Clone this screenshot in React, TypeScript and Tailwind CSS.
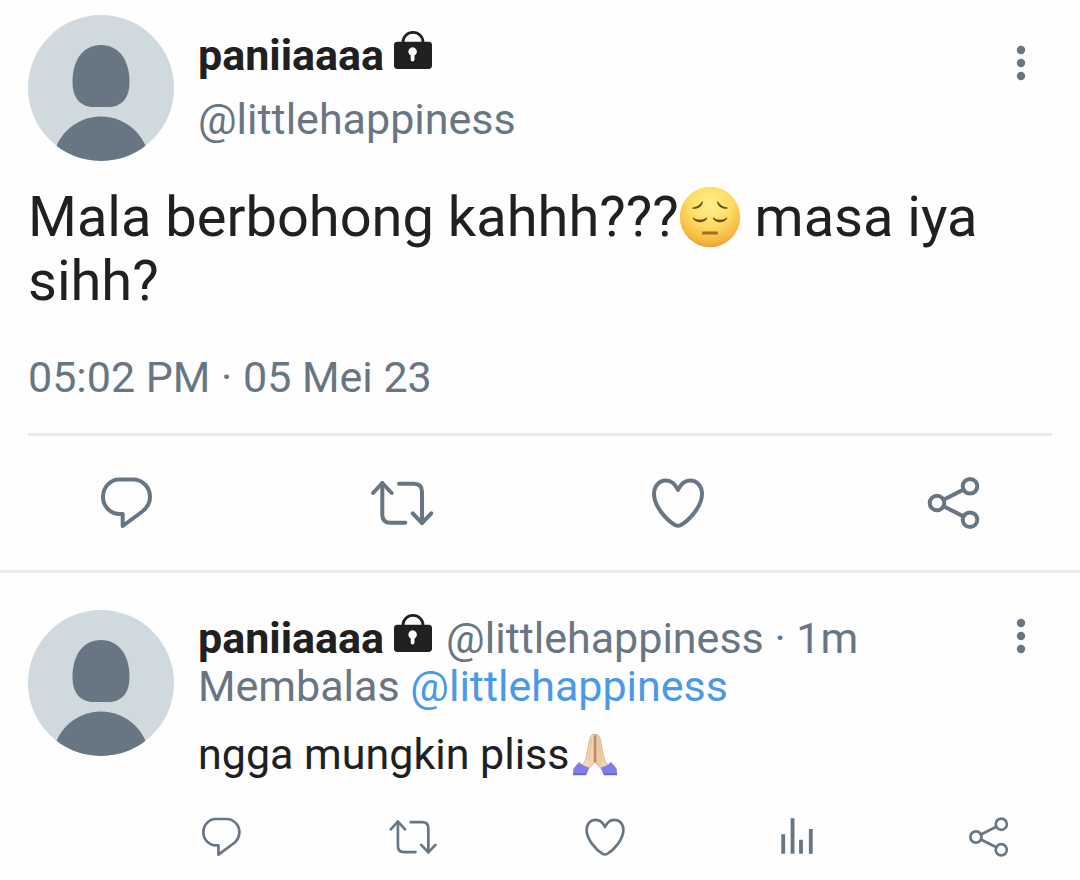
import type { ReactNode } from 'react';
import { clsx } from 'clsx';

interface IconProps {
  small?: boolean;
  children: ReactNode;
}

function Icon({ small, children }: IconProps) {
  return (
    <svg
      viewBox="2 2 60 60"
      fill="none"
      stroke="currentColor"
      strokeWidth={small ? 3.5 : 4}
      strokeLinecap="round"
      strokeLinejoin="round"
      className={clsx('overflow-visible', small ? 'size-[46px]' : 'size-[60px]')}
      aria-hidden="true"
    >
      {children}
    </svg>
  );
}

const icons = {
  reply: (
    <path d="M25 8.5H39C48.5 8.5 56 16 56 26C56 32.5 52.5 37.5 47 41.5L28.7 55V43H26C16.5 43 9 35.5 9 26C9 16 16.5 8.5 25 8.5Z" />
  ),
  retweet: (
    <>
      <path d="M3 22L12.3 12L21.7 22" />
      <path d="M12.3 12V43.7Q12.3 51.7 20.3 51.7H35.3" />
      <path d="M29 12.7H44Q52 12.7 52 20.7V52" />
      <path d="M42.7 42.3L52 52L61.3 42.3" />
    </>
  ),
  like: (
    <path d="M32 19C29 12.5 25 9.6 20 9.6C13 9.6 8 15 8 23C8 35 20 48.5 29 54Q32 55.6 35 54C44 48.5 56 35 56 23C56 15 51 9.6 44 9.6C39 9.6 35 12.5 32 19Z" />
  ),
  stats: (
    <path
      d="M14 28.3V54M26.2 7.6V54M37.2 35.7V54M50 21.6V54"
      strokeWidth="5"
      strokeLinecap="butt"
    />
  ),
  share: (
    <>
      <circle cx="15" cy="32" r="7.3" />
      <circle cx="48" cy="15.3" r="7.3" />
      <circle cx="48" cy="48.7" r="7.3" />
      <path d="M21.5 28.7L41.5 18.6M21.5 35.3L41.5 45.4" />
    </>
  ),
};

type IconName = keyof typeof icons;

const labels: Record<IconName, string> = {
  reply: 'Balas',
  retweet: 'Retweet',
  like: 'Suka',
  stats: 'Statistik',
  share: 'Bagikan',
};

function Actions({ names, small }: { names: IconName[]; small?: boolean }) {
  return (
    <div className="flex items-center justify-between">
      {names.map((name) => (
        <button key={name} type="button" aria-label={labels[name]} className="cursor-pointer">
          <Icon small={small}>{icons[name]}</Icon>
        </button>
      ))}
    </div>
  );
}

function Avatar() {
  return (
    <svg viewBox="0 0 146 146" className="size-[146px] shrink-0 rounded-full" role="img" aria-label="paniiaaaa">
      <rect width="146" height="146" fill="#cfd9de" />
      <path
        d="M73 30C91 30 101.5 45 101.5 67C101.5 85 92 92 80 92H66C54 92 44.5 85 44.5 67C44.5 45 55 30 73 30Z"
        fill="#687684"
      />
      <circle cx="73" cy="150" r="48.5" fill="#687684" />
    </svg>
  );
}

function Lock() {
  return (
    <svg viewBox="0 0 38 38" className="size-[38px] shrink-0" role="img" aria-label="Akun terkunci">
      <path d="M9 14V11a10 9.6 0 0 1 20 0V14" fill="none" stroke="#202020" strokeWidth="2.8" />
      <rect y="10.7" width="38" height="27.3" rx="3.4" fill="#202020" />
      <path d="M16.7 24.5a4.3 4.3 0 1 1 3.8 0V28.5a1.9 1.9 0 0 1-3.8 0Z" fill="#fff" />
    </svg>
  );
}

function More() {
  return (
    <button type="button" aria-label="Lainnya" className="h-9 shrink-0 cursor-pointer">
      <svg viewBox="0 0 16 36" className="h-9 w-4" fill="currentColor" aria-hidden="true">
        <circle cx="8" cy="5" r="4.2" />
        <circle cx="8" cy="18" r="4.2" />
        <circle cx="8" cy="31" r="4.2" />
      </svg>
    </button>
  );
}

function PensiveFace() {
  return (
    <svg viewBox="0 0 62 62" className="inline-block size-[62px] align-[-12px]" role="img" aria-label="😔">
      <defs>
        <radialGradient id="face" cx="0.5" cy="0.3" r="0.72">
          <stop offset="0" stopColor="#fff08a" />
          <stop offset="0.5" stopColor="#fddc62" />
          <stop offset="0.85" stopColor="#f6b640" />
          <stop offset="1" stopColor="#e79b35" />
        </radialGradient>
      </defs>
      <circle cx="31" cy="31" r="30.2" fill="url(#face)" />
      <g fill="#6d4b14">
        <path d="M13.5 21.5C18 21 21.5 18.5 23 15.2C24 15 24 16.3 23.6 17.2C22 21.2 18 23.2 14 22.8C13 22.6 13 21.8 13.5 21.5Z" />
        <path d="M48.5 21.5C44 21 40.5 18.5 39 15.2C38 15 38 16.3 38.4 17.2C40 21.2 44 23.2 48 22.8C49 22.6 49 21.8 48.5 21.5Z" />
        <path d="M14.3 31.5C17.5 34.4 24.5 34.4 27.3 31.5C28.5 31 28.2 32.6 27.5 33.4C24 37.2 17.6 37.2 14.4 33.2C13.6 32 13.6 31 14.3 31.5Z" />
        <path d="M47.7 31.5C44.5 34.4 37.5 34.4 34.7 31.5C33.5 31 33.8 32.6 34.5 33.4C38 37.2 44.4 37.2 47.6 33.2C48.4 32 48.4 31 47.7 31.5Z" />
      </g>
      <rect x="23" y="45.6" width="16" height="3" rx="1.2" fill="#a76a20" />
    </svg>
  );
}

function FoldedHands() {
  return (
    <svg viewBox="0 0 46 44" className="ml-0.5 inline-block h-11 w-[46px] align-[-8px]" role="img" aria-label="🙏🏻">
      <defs>
        <linearGradient id="skin" x1="0" y1="0" x2="1" y2="0">
          <stop offset="0" stopColor="#f6dcbd" />
          <stop offset="0.42" stopColor="#f3d2ad" />
          <stop offset="0.5" stopColor="#bd9470" />
          <stop offset="0.58" stopColor="#edc7a0" />
          <stop offset="1" stopColor="#f6dcbd" />
        </linearGradient>
      </defs>
      <path
        d="M20.5 1.5Q22.2 .4 23 2Q23.8 .4 25.8 1.8L28 5C29.5 11 30 15 31.3 21C32.2 26 33 29 36 32L31 38L23 29L15 38L10 32C13 29 14 26 14.8 21C16 15 17 8 18.5 3.5Z"
        fill="url(#skin)"
        stroke="#cda581"
        strokeWidth="0.7"
      />
      <path d="M23 3V29" stroke="#a57d5c" strokeWidth="1.1" />
      <path d="M19.7 6C18.5 15 17.5 21 16.5 28M26.5 6C27.8 15 28.5 21 29.5 28" stroke="#dfb996" strokeWidth="0.8" fill="none" />
      <path d="M7 29C10 32 13 33.5 16.8 34.4C16.4 37.5 15.6 39.5 14 42H1Q1 39 1.5 35.5Z" fill="#7f7de8" />
      <path d="M39 29C36 32 33 33.5 29.2 34.4C29.6 37.5 30.4 39.5 32 42H45Q45 39 44.5 35.5Z" fill="#7f7de8" />
      <path d="M1 40.6H14.8L14 42.2H1ZM45 40.6H31.2L32 42.2H45Z" fill="#6664c4" />
    </svg>
  );
}

export default function App() {
  return (
    <main className="min-h-screen bg-[#fefefe] pb-4 font-['Roboto',sans-serif] text-[43px] leading-[48px] text-[#687684]">
      <article className="border-b-3 border-[#ebebeb] pt-[15px]">
        <div className="px-7">
          <header className="flex items-start gap-6">
            <Avatar />
            <div className="min-w-0 flex-1 pt-4">
              <div className="flex items-start gap-2.5">
                <h1 className="font-bold text-[#202020]">paniiaaaa</h1>
                <Lock />
              </div>
              <p className="mt-4">@littlehappiness</p>
            </div>
            <div className="flex pt-[30px] pr-[23px]">
              <More />
            </div>
          </header>

          <p className="mt-6 text-[56px] leading-[64px] text-[#202020]">
            Mala berbohong kahhh???
            <PensiveFace /> masa iya sihh?
          </p>
          <time className="mt-10 block">05:02 PM · 05 Mei 23</time>
          <hr className="mt-8 border-t-3 border-[#ebebeb]" />
        </div>
        <div className="px-24 py-[37px]">
          <Actions names={['reply', 'retweet', 'like', 'share']} />
        </div>
      </article>

      <article className="flex items-start gap-6 px-7 pt-[37px]">
        <Avatar />
        <div className="min-w-0 flex-1">
          <div className="flex items-start justify-between pt-1">
            <div className="flex items-start">
              <h2 className="mr-2.5 font-bold text-[#202020]">paniiaaaa</h2>
              <Lock />
              <span className="ml-3.5">@littlehappiness · 1m</span>
            </div>
            <div className="flex pt-1 pr-[23px]">
              <More />
            </div>
          </div>
          <p>
            Membalas{' '}
            <a href="#littlehappiness" className="text-[#4a99e9]">
              @littlehappiness
            </a>
          </p>
          <p className="mt-5 text-[#202020]">
            ngga mungkin pliss
            <FoldedHands />
          </p>
          <div className="mt-9 pr-10">
            <Actions small names={['reply', 'retweet', 'like', 'stats', 'share']} />
          </div>
        </div>
      </article>
    </main>
  );
}
